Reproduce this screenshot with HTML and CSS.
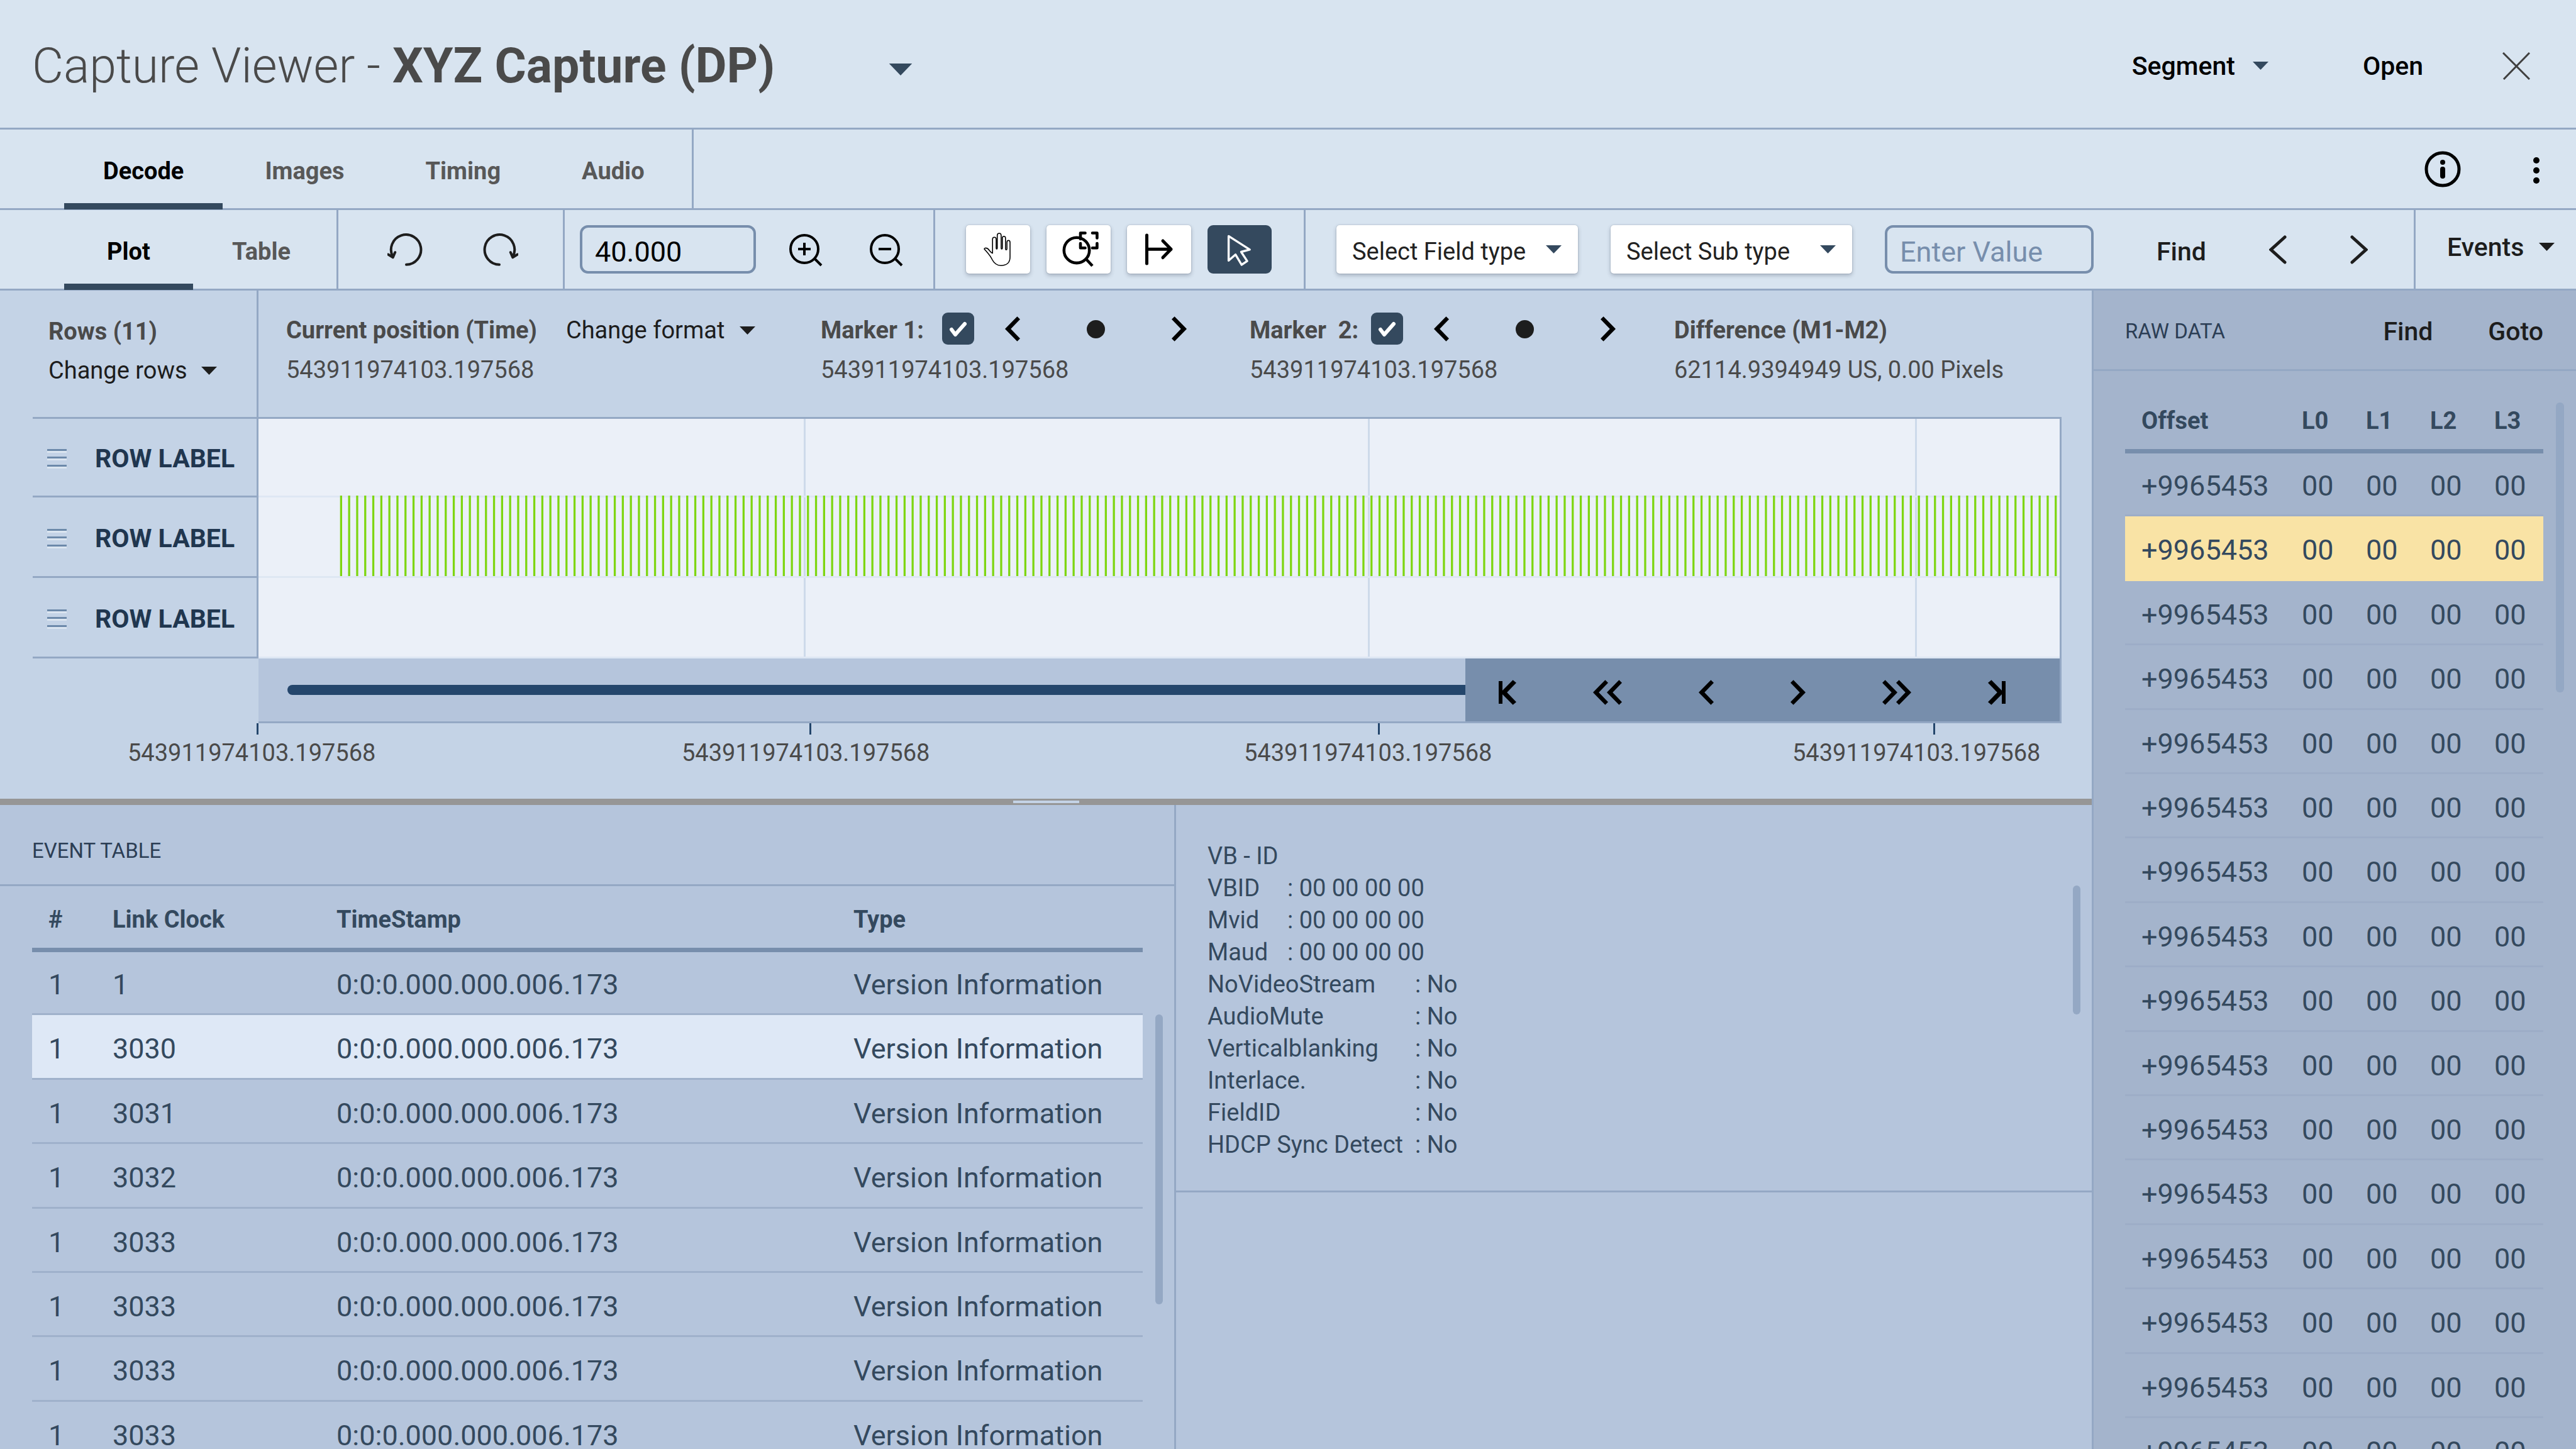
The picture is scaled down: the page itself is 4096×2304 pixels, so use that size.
FILE: index.html
```html
<!DOCTYPE html>
<html lang="en">
<head>
<meta charset="utf-8">
<title>Capture Viewer</title>
<link rel="stylesheet" href="styles.css">
</head>
<body>
<svg class="defs" aria-hidden="true">
  <symbol id="caret" viewBox="0 0 25 13"><path d="M0 0H25L12.5 13Z"/></symbol>
  <symbol id="chev-left" viewBox="0 0 24 40"><path d="M24 4.7L19.4 0.2L0 20L19.4 39.8L24 35.3L9.2 20Z"/></symbol>
  <symbol id="chev-right" viewBox="0 0 24 40"><path d="M0 4.7L4.6 0.2L24 20L4.6 39.8L0 35.3L14.8 20Z"/></symbol>
  <symbol id="grip" viewBox="0 0 31 32"><path d="M0 4h31v3H0zM0 16h31v3H0zM0 29h31v3H0z" fill="#dbe5f0"/><path d="M0 1h31v3H0zM0 13h31v3H0zM0 26h31v3H0z" fill="#6c89aa"/></symbol>
  <symbol id="check" viewBox="0 0 51 51"><path d="M15 27L21 35L36 18" fill="none" stroke="#fff" stroke-width="6" stroke-linecap="round" stroke-linejoin="round"/></symbol>
</svg>

<header class="titlebar">
  <h1 class="title">Capture Viewer - <strong>XYZ Capture (DP)</strong></h1>
  <button class="btn title-menu" aria-label="Choose capture"><svg class="caret-lg"><use href="#caret"/></svg></button>
  <div class="title-actions">
    <button class="btn action">Segment<svg class="caret slate"><use href="#caret"/></svg></button>
    <button class="btn action">Open</button>
    <button class="btn" aria-label="Close"><svg width="44" height="44" viewBox="0 0 44 44" fill="none" stroke="#3f3f3f" stroke-width="3"><path d="M1 1L43 43M43 1L2 43"/></svg></button>
  </div>
</header>

<nav class="tabrow">
  <div class="tabs cell main-tabs">
    <button class="btn tab active">Decode</button>
    <button class="btn tab">Images</button>
    <button class="btn tab">Timing</button>
    <button class="btn tab">Audio</button>
  </div>
  <div class="tabrow-actions">
    <button class="btn" aria-label="Information"><svg width="58" height="58" viewBox="0 0 58 58"><circle cx="29" cy="29" r="26" fill="none" stroke="#000" stroke-width="5"/><circle cx="29" cy="18" r="4"/><path d="M29 29V40" stroke="#000" stroke-width="8" stroke-linecap="round"/></svg></button>
    <button class="btn more" aria-label="More"><svg width="10" height="42" viewBox="0 0 10 42"><circle cx="5" cy="5" r="5"/><circle cx="5" cy="21" r="5"/><circle cx="5" cy="37" r="5"/></svg></button>
  </div>
</nav>

<div class="toolbar">
  <div class="tabs cell view-tabs">
    <button class="btn tab active">Plot</button>
    <button class="btn tab">Table</button>
  </div>
  <div class="cell history">
    <button class="btn" aria-label="Undo"><svg width="60" height="60" viewBox="-30 -30 60 60" fill="none" stroke="#1d1d1d" stroke-width="4" stroke-linecap="round" stroke-linejoin="round"><path d="M0 23.8A23.8 23.8 0 1 0 -21.5 11M-29 7.5L-21.2 12.3L-17.8 4.2"/></svg></button>
    <button class="btn" aria-label="Redo"><svg width="60" height="60" viewBox="-30 -30 60 60" fill="none" stroke="#1d1d1d" stroke-width="4" stroke-linecap="round" stroke-linejoin="round"><path d="M0 23.8A23.8 23.8 0 1 1 21.5 11M29 7.5L21.2 12.3L17.8 4.2"/></svg></button>
  </div>
  <div class="cell zoom">
    <input class="field zoom-value" type="text" value="40.000" aria-label="Zoom">
    <button class="btn" aria-label="Zoom in"><svg width="56" height="56" viewBox="-27 -27 56 56" fill="none" stroke="#000" stroke-width="4"><circle r="22"/><path d="M16 15L27 26M-10 0H10M0 -10V10"/></svg></button>
    <button class="btn" aria-label="Zoom out"><svg width="56" height="56" viewBox="-27 -27 56 56" fill="none" stroke="#000" stroke-width="4"><circle r="22"/><path d="M16 15L27 26M-10 0H10"/></svg></button>
  </div>
  <div class="cell tools">
    <button class="btn tool" aria-label="Pan"><svg viewBox="0 0 102 77" fill="none" stroke="#000" stroke-width="1.6"><path d="M29.1 38C29 36.3 31.5 35.8 34 37C37 38.8 39 44.3 42.2 44.5V22.5C42.2 18.2 48 18.2 48 22.5V36.4C48 38.3 49.7 38.3 49.7 36.4V16.6C49.7 11.8 55.9 11.8 55.9 16.6V36.4C55.9 38.3 57.8 38.3 57.8 36.4V20.5C57.8 16.8 62.8 16.8 62.8 20.5V37.5C62.8 39.9 65.1 39.9 65.1 37.5V27.6C65.1 23.2 70 23.2 70 27.6V51C70 60 64 64.2 55.5 64.2C48.5 64.2 44.5 60.5 41.5 54.5C38.5 48 33.5 43 29.1 38Z"/></svg></button>
    <button class="btn tool" aria-label="Zoom to selection"><svg viewBox="0 0 102 77" fill="none" stroke="#000" stroke-width="4.6"><circle cx="48" cy="39.9" r="20.2"/><path d="M62.5 53.5L73 64.8"/><path d="M54 22V12.5H61.5M73 12.5H80.4V20.5M54 29V36.2H61.5M73 36.2H80.4V29" stroke-linecap="round" stroke-linejoin="round"/></svg></button>
    <button class="btn tool" aria-label="Move from start"><svg viewBox="0 0 102 77" fill="none" stroke="#000" stroke-width="5" stroke-linecap="round" stroke-linejoin="round"><path d="M31.5 16V61M31.5 38.3H70M57 25L70 38.3L57 51.6"/></svg></button>
    <button class="btn tool selected" aria-label="Select" aria-pressed="true"><svg viewBox="0 0 102 77" fill="none" stroke="#fff" stroke-width="3.4" stroke-linejoin="round"><path d="M33.6 17.4L67.2 38.9L53.5 42.5L63.1 57.1L54.2 63L44.6 46.8L33.6 56.3Z"/></svg></button>
  </div>
  <div class="cell filters">
    <div class="select"><select aria-label="Field type"><option>Select Field type</option></select><svg class="caret slate"><use href="#caret"/></svg></div>
    <div class="select"><select aria-label="Sub type"><option>Select Sub type</option></select><svg class="caret slate"><use href="#caret"/></svg></div>
    <input class="field find-value" type="text" placeholder="Enter Value" aria-label="Value">
    <button class="btn action find">Find</button>
    <div class="find-nav">
      <button class="btn" aria-label="Previous match"><svg width="28" height="46" viewBox="0 0 28 46" fill="none" stroke="#1d1d1d" stroke-width="5" stroke-linecap="round"><path d="M25 3L3 23L25 43"/></svg></button>
      <button class="btn" aria-label="Next match"><svg width="28" height="46" viewBox="0 0 28 46" fill="none" stroke="#1d1d1d" stroke-width="5" stroke-linecap="round"><path d="M3 3L25 23L3 43"/></svg></button>
    </div>
  </div>
  <div class="events"><button class="btn action events-menu">Events<svg class="caret"><use href="#caret"/></svg></button></div>
</div>

<main class="workspace">
  <div class="left">
    <section class="plot">
      <div class="summary">
        <div class="rows-info">
          <div class="label">Rows (11)</div>
          <button class="btn menu">Change rows<svg class="caret"><use href="#caret"/></svg></button>
        </div>
        <div class="readings">
          <div>
            <div class="reading-head format"><span class="label">Current position (Time)</span><button class="btn menu">Change format<svg class="caret"><use href="#caret"/></svg></button></div>
            <div class="value">543911974103.197568</div>
          </div>
          <div>
            <div class="reading-head">
              <label class="label marker-label" for="marker1">Marker 1:</label>
              <span class="check"><input type="checkbox" id="marker1" checked><svg><use href="#check"/></svg></span>
              <div class="marker-nav">
                <button class="btn" aria-label="Marker 1 back"><svg class="chev"><use href="#chev-left"/></svg></button>
                <button class="btn" aria-label="Marker 1 centre"><span class="dot"></span></button>
                <button class="btn" aria-label="Marker 1 forward"><svg class="chev"><use href="#chev-right"/></svg></button>
              </div>
            </div>
            <div class="value">543911974103.197568</div>
          </div>
          <div>
            <div class="reading-head">
              <label class="label marker-label" for="marker2">Marker&nbsp; 2:</label>
              <span class="check"><input type="checkbox" id="marker2" checked><svg><use href="#check"/></svg></span>
              <div class="marker-nav">
                <button class="btn" aria-label="Marker 2 back"><svg class="chev"><use href="#chev-left"/></svg></button>
                <button class="btn" aria-label="Marker 2 centre"><span class="dot"></span></button>
                <button class="btn" aria-label="Marker 2 forward"><svg class="chev"><use href="#chev-right"/></svg></button>
              </div>
            </div>
            <div class="value">543911974103.197568</div>
          </div>
          <div>
            <div class="reading-head"><span class="label">Difference (M1-M2)</span></div>
            <div class="value">62114.9394949 US, 0.00 Pixels</div>
          </div>
        </div>
      </div>
      <div class="chart-grid">
        <ul class="row-labels">
          <li><svg class="grip"><use href="#grip"/></svg>ROW LABEL</li>
          <li><svg class="grip"><use href="#grip"/></svg>ROW LABEL</li>
          <li><svg class="grip"><use href="#grip"/></svg>ROW LABEL</li>
        </ul>
        <div class="chart">
          <svg class="traces" viewBox="0 0 2864 381" preserveAspectRatio="none">
            <path d="M868.5 0V381M1765.5 0V381M2635.5 0V381" stroke="#cddaea" stroke-width="3"/>
            <path d="M0 123.5H2864M0 251.5H2864M0 379.5H2864" stroke="#dee7f3" stroke-width="3"/>
            <path d="M129.7 186H2860" stroke="#7ed612" stroke-width="128" stroke-dasharray="3.3 9.5"/>
          </svg>
          <div class="scrub">
            <div class="track"></div>
            <div class="transport">
              <button class="btn" aria-label="First"><svg width="28" height="40" viewBox="0 0 28 40"><path d="M0 2h6v15L22.6 .2L28 4.7L13.2 20L28 35.3L22.6 39.8L6 23v15H0z"/></svg></button>
              <button class="btn" aria-label="Fast back"><svg width="46" height="40" viewBox="0 0 46 40"><path d="M24 4.7L19.4 .2L0 20L19.4 39.8L24 35.3L9.2 20ZM46 4.7L41.4 .2L22 20L41.4 39.8L46 35.3L31.2 20Z"/></svg></button>
              <button class="btn" aria-label="Back"><svg class="chev"><use href="#chev-left"/></svg></button>
              <button class="btn" aria-label="Forward"><svg class="chev"><use href="#chev-right"/></svg></button>
              <button class="btn" aria-label="Fast forward"><svg width="46" height="40" viewBox="0 0 46 40"><path d="M0 4.7L4.6 .2L24 20L4.6 39.8L0 35.3L14.8 20ZM22 4.7L26.6 .2L46 20L26.6 39.8L22 35.3L36.8 20Z"/></svg></button>
              <button class="btn" aria-label="Last"><svg width="28" height="40" viewBox="0 0 28 40"><path d="M28 2h-6v15L5.4 .2L0 4.7L14.8 20L0 35.3L5.4 39.8L22 23v15H28z"/></svg></button>
            </div>
          </div>
        </div>
      </div>
      <div class="ticks"><i></i><i></i><i></i><i></i></div>
      <div class="tick-labels"><span>543911974103.197568</span><span>543911974103.197568</span><span>543911974103.197568</span><span>543911974103.197568</span></div>
    </section>

    <div class="splitter" role="separator"><span></span></div>

    <div class="lower">
      <section class="event-panel">
        <h2 class="panel-title">EVENT TABLE</h2>
        <div class="scroll-area">
          <table class="data event-table">
            <colgroup><col class="c-num"><col class="c-clock"><col class="c-time"><col></colgroup>
            <thead><tr><th>#</th><th>Link Clock</th><th>TimeStamp</th><th>Type</th></tr></thead>
            <tbody>
              <tr><td>1</td><td>1</td><td>0:0:0.000.000.006.173</td><td>Version Information</td></tr>
              <tr class="current"><td>1</td><td>3030</td><td>0:0:0.000.000.006.173</td><td>Version Information</td></tr>
              <tr><td>1</td><td>3031</td><td>0:0:0.000.000.006.173</td><td>Version Information</td></tr>
              <tr><td>1</td><td>3032</td><td>0:0:0.000.000.006.173</td><td>Version Information</td></tr>
              <tr><td>1</td><td>3033</td><td>0:0:0.000.000.006.173</td><td>Version Information</td></tr>
              <tr><td>1</td><td>3033</td><td>0:0:0.000.000.006.173</td><td>Version Information</td></tr>
              <tr><td>1</td><td>3033</td><td>0:0:0.000.000.006.173</td><td>Version Information</td></tr>
              <tr><td>1</td><td>3033</td><td>0:0:0.000.000.006.173</td><td>Version Information</td></tr>
            </tbody>
          </table>
          <div class="thumb event-thumb"></div>
        </div>
      </section>
      <section class="detail-panel">
        <div class="detail">
          <div class="detail-text">
            <p>VB - ID</p>
            <dl class="pairs short">
              <dt>VBID</dt><dd>: 00 00 00 00</dd>
              <dt>Mvid</dt><dd>: 00 00 00 00</dd>
              <dt>Maud</dt><dd>: 00 00 00 00</dd>
            </dl>
            <dl class="pairs long">
              <dt>NoVideoStream</dt><dd>: No</dd>
              <dt>AudioMute</dt><dd>: No</dd>
              <dt>Verticalblanking</dt><dd>: No</dd>
              <dt>Interlace.</dt><dd>: No</dd>
              <dt>FieldID</dt><dd>: No</dd>
              <dt>HDCP Sync Detect</dt><dd>: No</dd>
            </dl>
          </div>
          <div class="thumb detail-thumb"></div>
        </div>
      </section>
    </div>
  </div>

  <aside class="raw">
    <div class="raw-head">
      <h2>RAW DATA</h2>
      <button class="btn action">Find</button>
      <button class="btn action">Goto</button>
    </div>
    <div class="scroll-area">
      <table class="data raw-table">
        <colgroup><col class="c-offset"><col class="c-lane"><col class="c-lane"><col class="c-lane"><col></colgroup>
        <thead><tr><th>Offset</th><th>L0</th><th>L1</th><th>L2</th><th>L3</th></tr></thead>
        <tbody>
          <tr><td>+9965453</td><td>00</td><td>00</td><td>00</td><td>00</td></tr>
          <tr class="current"><td>+9965453</td><td>00</td><td>00</td><td>00</td><td>00</td></tr>
          <tr><td>+9965453</td><td>00</td><td>00</td><td>00</td><td>00</td></tr>
          <tr><td>+9965453</td><td>00</td><td>00</td><td>00</td><td>00</td></tr>
          <tr><td>+9965453</td><td>00</td><td>00</td><td>00</td><td>00</td></tr>
          <tr><td>+9965453</td><td>00</td><td>00</td><td>00</td><td>00</td></tr>
          <tr><td>+9965453</td><td>00</td><td>00</td><td>00</td><td>00</td></tr>
          <tr><td>+9965453</td><td>00</td><td>00</td><td>00</td><td>00</td></tr>
          <tr><td>+9965453</td><td>00</td><td>00</td><td>00</td><td>00</td></tr>
          <tr><td>+9965453</td><td>00</td><td>00</td><td>00</td><td>00</td></tr>
          <tr><td>+9965453</td><td>00</td><td>00</td><td>00</td><td>00</td></tr>
          <tr><td>+9965453</td><td>00</td><td>00</td><td>00</td><td>00</td></tr>
          <tr><td>+9965453</td><td>00</td><td>00</td><td>00</td><td>00</td></tr>
          <tr><td>+9965453</td><td>00</td><td>00</td><td>00</td><td>00</td></tr>
          <tr><td>+9965453</td><td>00</td><td>00</td><td>00</td><td>00</td></tr>
          <tr><td>+9965453</td><td>00</td><td>00</td><td>00</td><td>00</td></tr>
        </tbody>
      </table>
      <div class="thumb raw-thumb"></div>
    </div>
  </aside>
</main>
</body>
</html>
```
FILE: styles.css
```css
:root {
  --bg: #d8e4f0;
  --plot-bg: #c4d3e6;
  --lower-bg: #b5c5dc;
  --raw-bg: #a4b4cc;
  --line: #94a8c4;
  --steel: #778eac;
  --slate: #34495e;
  --navy: #24466c;
  --ink: #1d1d1d;
  --grey: #4a4a4a;
}

* { box-sizing: border-box; }

body {
  margin: 0;
  height: 100vh;
  display: flex;
  flex-direction: column;
  overflow: hidden;
  background: var(--bg);
  color: var(--ink);
  font: 400 38px/46px Roboto, "Liberation Sans", sans-serif;
}

.defs { display: none; }
h1, h2, p, ul, dl, dd { margin: 0; padding: 0; }
svg { display: block; flex: none; }

.btn {
  display: flex;
  align-items: center;
  margin: 0;
  padding: 0;
  border: 0;
  background: none;
  color: inherit;
  font: inherit;
  white-space: nowrap;
}

.caret { width: 25px; height: 13px; fill: var(--ink); }
.slate, .caret-lg { fill: var(--slate); }
.caret-lg { width: 38px; height: 19px; }
.chev { width: 24px; height: 40px; }
.action { font-size: 41px; font-weight: 500; }

/* Title bar */
.titlebar {
  flex: none;
  height: 206px;
  display: flex;
  align-items: center;
  padding: 6px 73px 0 51px;
  border-bottom: 3px solid var(--line);
}
.title { font-size: 77px; line-height: 90px; font-weight: 300; color: var(--grey); }
.title strong { font-weight: 700; }
.title-menu { padding: 12px 0 0 181px; }
.title-actions { margin-left: auto; display: flex; align-items: center; color: #000; }
.title-actions .action { gap: 28px; margin-right: 150px; }
.title-actions .action + .action { margin-right: 126px; }

/* Tabs */
.tabrow, .toolbar {
  flex: none;
  height: 128px;
  display: flex;
  border-bottom: 3px solid var(--line);
}
.cell { display: flex; align-items: center; border-right: 3px solid var(--line); }
.tabs { align-items: stretch; padding-left: 102px; }
.main-tabs { gap: 5px; padding-right: 13px; }
.tab {
  justify-content: center;
  min-width: 205px;
  margin-bottom: -2px;
  padding: 14px 62px 0;
  border-bottom: 10px solid transparent;
  color: #585858;
  font-weight: 700;
}
.tab.active { border-bottom-color: var(--slate); color: #000; }
.tabrow-actions { margin-left: auto; display: flex; align-items: center; gap: 115px; padding-right: 58px; }
.more { padding-top: 4px; }

/* Toolbar */
.view-tabs { flex: 0 0 538px; }
.history { flex: 0 0 360px; justify-content: center; gap: 88px; padding-left: 6px; }
.zoom { flex: 0 0 589px; padding-left: 24px; }
.zoom .btn { margin-left: 50px; }
.zoom .btn + .btn { margin-left: 72px; }
.tools { flex: 0 0 589px; padding-left: 49px; gap: 26px; }
.filters { flex: 1; padding-left: 49px; gap: 52px; }
.events { flex: 0 0 255px; display: flex; align-items: center; padding: 0 0 8px 50px; }

.field {
  height: 77px;
  padding: 8px 20px 0;
  border: 4px solid var(--steel);
  border-radius: 13px;
  background: none;
  color: #000;
  font: inherit;
  font-size: 45px;
}
.field::placeholder { color: var(--steel); opacity: 1; }
.zoom-value { width: 280px; }
.find-value { width: 332px; }

.tool {
  width: 102px;
  height: 77px;
  border-radius: 5px;
  background: #fff;
  box-shadow: 0 3px 6px rgba(50, 60, 80, 0.3), 0 0 2px rgba(50, 60, 80, 0.3);
}
.tool svg { width: 102px; height: 77px; }
.tool.selected { border-radius: 9px; background: var(--slate); box-shadow: none; }

.select { display: grid; align-items: center; }
.select > * { grid-area: 1 / 1; }
.select select {
  appearance: none;
  width: 384px;
  height: 77px;
  padding: 6px 60px 0 25px;
  border: 0;
  border-radius: 5px;
  background: #fff;
  box-shadow: 0 3px 6px rgba(50, 60, 80, 0.3), 0 0 2px rgba(50, 60, 80, 0.3);
  color: #222;
  font: inherit;
}
.select svg { justify-self: end; margin-right: 26px; pointer-events: none; }

.find { padding: 6px 48px 0; }
.find-nav { display: flex; gap: 101px; }
.events-menu { gap: 24px; }

/* Workspace */
.workspace { flex: 1; min-height: 0; display: grid; grid-template-columns: minmax(0, 1fr) 770px; }
.left { min-height: 0; display: flex; flex-direction: column; }
.plot { background: var(--plot-bg); padding-bottom: 44px; }

.summary { display: flex; height: 201px; }
.rows-info { flex: 0 0 411px; padding: 34px 0 0 77px; border-right: 3px solid var(--line); line-height: 62px; }
.label { color: var(--grey); font-weight: 700; white-space: nowrap; }
.menu { gap: 22px; line-height: 62px; }
.readings {
  flex: 1;
  display: grid;
  grid-template-columns: 850fr 682fr 675fr 664fr;
  padding: 32px 0 0 44px;
}
.reading-head { display: flex; align-items: center; height: 62px; }
.format { gap: 46px; }
.format .menu { gap: 24px; }
.value { color: var(--grey); line-height: 64px; }
.marker-label { width: 193px; }
.check { display: grid; margin-bottom: 6px; }
.check > * { grid-area: 1 / 1; width: 51px; height: 51px; margin: 0; }
.check input { appearance: none; border-radius: 9px; background: var(--slate); }
.check svg { pointer-events: none; }
.marker-nav { display: flex; align-items: center; gap: 106px; margin-left: 49px; padding-bottom: 4px; }
.dot { width: 29px; height: 29px; border-radius: 50%; background: var(--ink); }

.chart-grid { display: grid; grid-template-columns: 411px minmax(0, 1fr); padding-right: 48px; }
.row-labels { list-style: none; align-self: start; margin-left: 52px; border-top: 3px solid var(--line); border-right: 3px solid var(--line); }
.row-labels li {
  display: flex;
  align-items: center;
  gap: 45px;
  height: 128px;
  padding: 4px 0 0 23px;
  border-bottom: 3px solid var(--line);
  color: #20364f;
  font-size: 41px;
  font-weight: 700;
}
.row-labels li:first-child { height: 125px; }
.grip { width: 31px; height: 32px; }
.chart { border: 3px solid var(--line); border-left: 0; background: #ebf0f8; }
.traces { width: 100%; height: 381px; }
.scrub { display: flex; align-items: center; height: 100px; background: var(--lower-bg); }
.track { flex: 1; height: 16px; margin-left: 46px; border-radius: 8px 0 0 8px; background: var(--navy); }
.transport {
  align-self: stretch;
  display: flex;
  align-items: center;
  gap: 122px;
  padding: 7px 86px 0 53px;
  background: var(--steel);
}
.ticks { display: grid; grid-template-columns: 879fr 904fr 883fr 252fr; padding-left: 408px; }
.ticks i { width: 3px; height: 18px; background: var(--navy); }
.tick-labels {
  display: grid;
  grid-template-columns: 881fr 894fr 872fr 476fr;
  padding-left: 203px;
  color: var(--grey);
  line-height: 58px;
}

.splitter { flex: none; height: 10px; display: flex; align-items: center; justify-content: center; background: #969696; }
.splitter span { width: 105px; height: 4px; background: var(--plot-bg); }

/* Lower panels */
.lower {
  flex: 1;
  min-height: 0;
  display: grid;
  grid-template-columns: minmax(0, 1870fr) minmax(0, 1456fr);
  background: var(--lower-bg);
  color: var(--slate);
  overflow: hidden;
}
.event-panel { border-right: 3px solid var(--line); }
.panel-title {
  padding: 53px 51px 34px;
  border-bottom: 3px solid var(--line);
  color: #2c3e55;
  font-size: 33px;
  font-weight: 400;
  line-height: 39px;
}
.scroll-area { display: flex; align-items: flex-start; gap: 20px; padding: 0 18px 0 51px; }
.thumb { flex: none; width: 12px; border-radius: 6px; background: var(--line); }
.event-thumb { height: 461px; margin-top: 204px; }

.data { flex: 1; min-width: 0; table-layout: fixed; border-collapse: separate; border-spacing: 0; color: var(--slate); text-align: left; }
.data th, .data td { padding: 8px 0 0; white-space: nowrap; }
.data th { height: 105px; border-bottom: 7px solid var(--steel); font-weight: 700; }
.data td { height: 102px; border-bottom: 3px solid #9fb1cb; font-size: 45px; line-height: 52px; }
.data tr:nth-child(5n + 2) td, .data tr:nth-child(5n + 4) td { height: 103px; }
.data tr:first-child td { height: 100px; padding-top: 6px; }
.event-table th:first-child, .event-table td:first-child { padding-left: 26px; }
.event-table .current td { background: #dee8f6; }
.c-num { width: 128px; }
.c-clock { width: 356px; }
.c-time { width: 822px; }

.detail { display: flex; justify-content: space-between; border-bottom: 3px solid var(--line); }
.detail-text { padding: 56px 0 47px 50px; line-height: 51px; }
.pairs { display: grid; }
.short { grid-template-columns: 127px auto; }
.long { grid-template-columns: 330px auto; }
.detail-thumb { height: 205px; margin: 128px 18px 0 0; }

/* Raw data */
.raw { border-left: 3px solid var(--line); background: var(--raw-bg); overflow: hidden; min-height: 0; }
.raw-head {
  height: 128px;
  display: flex;
  align-items: center;
  gap: 88px;
  padding: 4px 52px 0 50px;
  border-bottom: 3px solid var(--line);
}
.raw-head h2 { margin-right: auto; color: #2c3e55; font-size: 33px; font-weight: 400; }
.raw .scroll-area { padding: 0 19px 0 50px; }
.raw-table th { height: 131px; padding-top: 34px; }
.data.raw-table th { height: 131px; padding-top: 34px; }
.raw-table td { border-bottom-color: #9dadc7; }
.data.raw-table tr > :first-child { padding-left: 26px; }
.raw-table .current td { border-bottom-color: #f9e3a5; background: #f9e3a5; }
.c-offset { width: 281px; }
.c-lane { width: 102px; }
.raw-thumb { width: 13px; height: 461px; margin-top: 50px; }
```
